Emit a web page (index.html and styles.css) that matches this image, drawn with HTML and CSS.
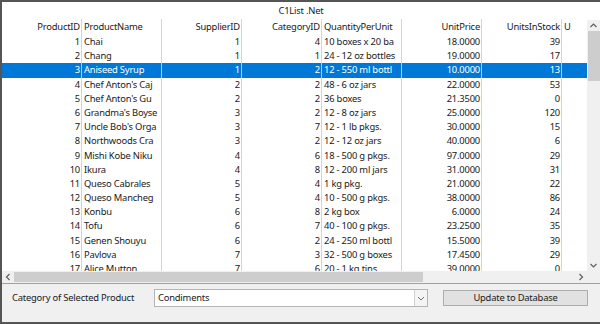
FILE: index.html
```html
<!DOCTYPE html>
<html lang="en">
<head>
    <meta charset="UTF-8">
    <title>C1List .Net</title>
    <link rel="stylesheet" href="styles.css">
</head>
<body>
    <div class="window">
        <div class="caption">C1List .Net</div>

        <div class="grid-area">
            <div class="grid">
                <div class="row head">
                    <div class="cell num">ProductID</div>
                    <div class="cell">ProductName</div>
                    <div class="cell num">SupplierID</div>
                    <div class="cell num">CategoryID</div>
                    <div class="cell">QuantityPerUnit</div>
                    <div class="cell num">UnitPrice</div>
                    <div class="cell num">UnitsInStock</div>
                    <div class="cell">U</div>
                </div>
                <div class="row"><div class="cell num">1</div><div class="cell">Chai</div><div class="cell num">1</div><div class="cell num">4</div><div class="cell">10 boxes x 20 ba</div><div class="cell num">18.0000</div><div class="cell num">39</div><div class="cell"></div></div>
                <div class="row"><div class="cell num">2</div><div class="cell">Chang</div><div class="cell num">1</div><div class="cell num">1</div><div class="cell">24 - 12 oz bottles</div><div class="cell num">19.0000</div><div class="cell num">17</div><div class="cell"></div></div>
                <div class="row selected"><div class="cell num">3</div><div class="cell">Aniseed Syrup</div><div class="cell num">1</div><div class="cell num">2</div><div class="cell">12 - 550 ml bottl</div><div class="cell num">10.0000</div><div class="cell num">13</div><div class="cell"></div></div>
                <div class="row"><div class="cell num">4</div><div class="cell">Chef Anton's Caj</div><div class="cell num">2</div><div class="cell num">2</div><div class="cell">48 - 6 oz jars</div><div class="cell num">22.0000</div><div class="cell num">53</div><div class="cell"></div></div>
                <div class="row"><div class="cell num">5</div><div class="cell">Chef Anton's Gu</div><div class="cell num">2</div><div class="cell num">2</div><div class="cell">36 boxes</div><div class="cell num">21.3500</div><div class="cell num">0</div><div class="cell"></div></div>
                <div class="row"><div class="cell num">6</div><div class="cell">Grandma's Boyse</div><div class="cell num">3</div><div class="cell num">2</div><div class="cell">12 - 8 oz jars</div><div class="cell num">25.0000</div><div class="cell num">120</div><div class="cell"></div></div>
                <div class="row"><div class="cell num">7</div><div class="cell">Uncle Bob's Orga</div><div class="cell num">3</div><div class="cell num">7</div><div class="cell">12 - 1 lb pkgs.</div><div class="cell num">30.0000</div><div class="cell num">15</div><div class="cell"></div></div>
                <div class="row"><div class="cell num">8</div><div class="cell">Northwoods Cra</div><div class="cell num">3</div><div class="cell num">2</div><div class="cell">12 - 12 oz jars</div><div class="cell num">40.0000</div><div class="cell num">6</div><div class="cell"></div></div>
                <div class="row"><div class="cell num">9</div><div class="cell">Mishi Kobe Niku</div><div class="cell num">4</div><div class="cell num">6</div><div class="cell">18 - 500 g pkgs.</div><div class="cell num">97.0000</div><div class="cell num">29</div><div class="cell"></div></div>
                <div class="row"><div class="cell num">10</div><div class="cell">Ikura</div><div class="cell num">4</div><div class="cell num">8</div><div class="cell">12 - 200 ml jars</div><div class="cell num">31.0000</div><div class="cell num">31</div><div class="cell"></div></div>
                <div class="row"><div class="cell num">11</div><div class="cell">Queso Cabrales</div><div class="cell num">5</div><div class="cell num">4</div><div class="cell">1 kg pkg.</div><div class="cell num">21.0000</div><div class="cell num">22</div><div class="cell"></div></div>
                <div class="row"><div class="cell num">12</div><div class="cell">Queso Mancheg</div><div class="cell num">5</div><div class="cell num">4</div><div class="cell">10 - 500 g pkgs.</div><div class="cell num">38.0000</div><div class="cell num">86</div><div class="cell"></div></div>
                <div class="row"><div class="cell num">13</div><div class="cell">Konbu</div><div class="cell num">6</div><div class="cell num">8</div><div class="cell">2 kg box</div><div class="cell num">6.0000</div><div class="cell num">24</div><div class="cell"></div></div>
                <div class="row"><div class="cell num">14</div><div class="cell">Tofu</div><div class="cell num">6</div><div class="cell num">7</div><div class="cell">40 - 100 g pkgs.</div><div class="cell num">23.2500</div><div class="cell num">35</div><div class="cell"></div></div>
                <div class="row"><div class="cell num">15</div><div class="cell">Genen Shouyu</div><div class="cell num">6</div><div class="cell num">2</div><div class="cell">24 - 250 ml bottl</div><div class="cell num">15.5000</div><div class="cell num">39</div><div class="cell"></div></div>
                <div class="row"><div class="cell num">16</div><div class="cell">Pavlova</div><div class="cell num">7</div><div class="cell num">3</div><div class="cell">32 - 500 g boxes</div><div class="cell num">17.4500</div><div class="cell num">29</div><div class="cell"></div></div>
                <div class="row"><div class="cell num">17</div><div class="cell">Alice Mutton</div><div class="cell num">7</div><div class="cell num">6</div><div class="cell">20 - 1 kg tins</div><div class="cell num">39.0000</div><div class="cell num">0</div><div class="cell"></div></div>
            </div>

            <div class="vscroll">
                <svg class="arrow" width="13" height="11" viewBox="0 0 13 11"><path d="M3.5 7 L6.5 4 L9.5 7" fill="none" stroke="#606060" stroke-width="1.2"/></svg>
                <div class="vtrack"><div class="vthumb"></div></div>
                <svg class="arrow" width="13" height="11" viewBox="0 0 13 11"><path d="M3.5 4 L6.5 7 L9.5 4" fill="none" stroke="#606060" stroke-width="1.2"/></svg>
            </div>
        </div>

        <div class="hscroll-row">
            <div class="hscroll">
                <svg class="arrow" width="12" height="12" viewBox="0 0 12 12"><path d="M7.5 3 L4.5 6 L7.5 9" fill="none" stroke="#606060" stroke-width="1.2"/></svg>
                <div class="htrack"><div class="hthumb"></div></div>
                <svg class="arrow" width="12" height="12" viewBox="0 0 12 12"><path d="M4.5 3 L7.5 6 L4.5 9" fill="none" stroke="#606060" stroke-width="1.2"/></svg>
            </div>
            <div class="corner"></div>
        </div>

        <div class="panel">
            <span class="label">Category of Selected Product</span>
            <div class="combo">
                <span class="combo-text">Condiments</span>
                <span class="combo-btn">
                    <svg width="12" height="16" viewBox="0 0 12 16"><path d="M3 7 L6 10 L9 7" fill="none" stroke="#707070" stroke-width="1"/></svg>
                </span>
            </div>
            <button class="update">Update to Database</button>
        </div>
    </div>
</body>
</html>
```

FILE: styles.css
```css
body, html {
    margin: 0;
    padding: 0;
}
body {
    font-family: "Noto Sans", "Open Sans", sans-serif;
    font-size: 9.4px;
    letter-spacing: -0.2px;
    color: #1a1a1a;
}
.window {
    width: 600px;
    height: 324px;
    box-sizing: border-box;
    border-left: 2px solid #555;
    border-top: 2px solid #555;
    border-bottom: 2px solid #555;
    background-color: #fff;
    display: flex;
    flex-direction: column;
    overflow: hidden;
}
.caption {
    height: 17px;
    line-height: 17px;
    text-align: center;
}
.grid-area {
    display: flex;
    height: 252px;
}
.grid {
    width: 585px;
    overflow: hidden;
}
.row {
    display: flex;
    height: 14.2px;
    line-height: 14.2px;
}
.row.head {
    height: 16px;
    line-height: 15px;
}
.row.selected {
    background-color: #0078d7;
    color: #fff;
}
.cell {
    flex: 0 0 80px;
    box-sizing: border-box;
    border-right: 1px solid #d4d4d4;
    padding: 0 2px;
    white-space: nowrap;
    overflow: hidden;
}
.cell.num {
    text-align: right;
    padding: 0 1px 0 0;
}
.row.selected .cell {
    border-right-color: #a8cdf0;
}
.vscroll {
    width: 13px;
    background-color: #f0f0f0;
    display: flex;
    flex-direction: column;
    margin-top: 1px;
}
.vtrack {
    flex: 1;
}
.vthumb {
    margin: 0 0 0 1px;
    height: 50px;
    background-color: #cdcdcd;
}
.arrow {
    display: block;
    flex: 0 0 auto;
}
.hscroll-row {
    display: flex;
    height: 12px;
}
.hscroll {
    width: 585px;
    display: flex;
    background-color: #f0f0f0;
}
.htrack {
    flex: 1;
    padding: 1px 0;
}
.hthumb {
    width: 409px;
    height: 10px;
    background-color: #cdcdcd;
}
.corner {
    flex: 1;
    background-color: #f0f0f0;
}
.panel {
    flex: 1;
    background-color: #f0f0f0;
    border-top: 1px solid #a0a0a0;
    display: flex;
    align-items: flex-start;
    padding: 5px 0 0 10px;
}
.label {
    width: 142px;
    line-height: 18px;
}
.combo {
    width: 274px;
    height: 18px;
    box-sizing: border-box;
    border: 1px solid #b4b4b4;
    background-color: #fff;
    display: flex;
}
.combo-text {
    flex: 1;
    padding-left: 3px;
    line-height: 16px;
}
.combo-btn {
    width: 12px;
    border-left: 1px solid #d0d0d0;
    background-color: #f4f4f4;
}
.combo-btn svg {
    display: block;
}
.update {
    margin: 1px 0 0 15px;
    width: 145px;
    height: 16px;
    padding: 0;
    border: 1px solid #adadad;
    background-color: #e1e1e1;
    font-family: inherit;
    font-size: inherit;
    letter-spacing: inherit;
    color: #1a1a1a;
    line-height: 14px;
}
```
